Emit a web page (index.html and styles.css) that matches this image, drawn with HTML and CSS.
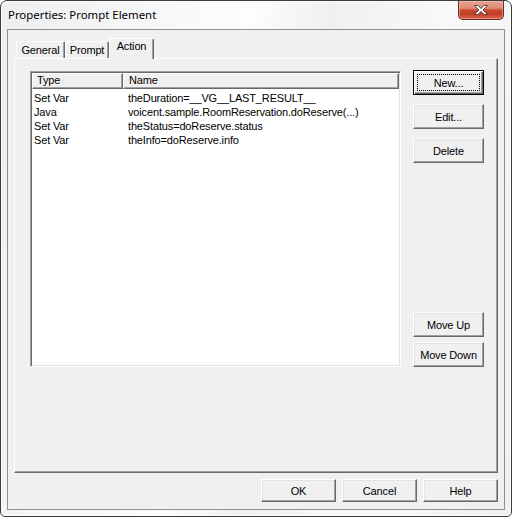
FILE: index.html
```html
<!DOCTYPE html>
<html>
<head>
<meta charset="utf-8">
<title>Properties: Prompt Element</title>
<link rel="stylesheet" href="styles.css">
</head>
<body>
<div class="window">
  <div class="titlebar">
    <span class="title">Properties: Prompt Element</span>
    <div class="close">
      <svg width="44" height="18" viewBox="0 0 44 18">
        <path d="M15.5 4.5 h3.4 l3.1 3 l3.1 -3 h3.4 l-4.5 4.5 l4.5 4.5 h-3.4 l-3.1 -3 l-3.1 3 h-3.4 l4.5 -4.5 z" fill="#ffffff" stroke="#4a3a3a" stroke-width="0.9" stroke-linejoin="round"/>
      </svg>
    </div>
  </div>
  <div class="client">
    <div class="tabs">
      <div class="tab tab-general">General</div>
      <div class="tab tab-prompt">Prompt</div>
      <div class="tab tab-action active">Action</div>
    </div>
    <div class="panel">
      <div class="list">
        <div class="list-head">
          <div class="hcell hcell-type">Type</div>
          <div class="hcell hcell-name">Name</div>
        </div>
        <div class="rows">
          <div class="row"><span class="c-type">Set Var</span><span class="c-name">theDuration=__VG__LAST_RESULT__</span></div>
          <div class="row"><span class="c-type">Java</span><span class="c-name">voicent.sample.RoomReservation.doReserve(...)</span></div>
          <div class="row"><span class="c-type">Set Var</span><span class="c-name">theStatus=doReserve.status</span></div>
          <div class="row"><span class="c-type">Set Var</span><span class="c-name">theInfo=doReserve.info</span></div>
        </div>
      </div>
      <div class="side">
        <div class="group group-top">
          <div class="btn btn-default"><span class="focus">New...</span></div>
          <div class="btn">Edit...</div>
          <div class="btn">Delete</div>
        </div>
        <div class="group group-bottom">
          <div class="btn">Move Up</div>
          <div class="btn">Move Down</div>
        </div>
      </div>
    </div>
    <div class="footer">
      <div class="btn btn-foot">OK</div>
      <div class="btn btn-foot">Cancel</div>
      <div class="btn btn-foot">Help</div>
    </div>
  </div>
</div>
</body>
</html>
```
FILE: styles.css
```css
* { box-sizing: border-box; }
html, body { margin: 0; padding: 0; }
body {
  width: 512px;
  height: 517px;
  background: #ffffff;
  font-family: "Liberation Sans", Arial, sans-serif;
  font-size: 11px;
  letter-spacing: -0.15px;
  color: #000;
  overflow: hidden;
}
.window {
  width: 512px;
  height: 517px;
  border: 1px solid #3c3c3c;
  border-radius: 7px 7px 5px 5px;
  background: linear-gradient(100deg, #eceef0 0%, #f6f7f8 25%, #fdfdfd 42%, #eef0f2 55%, #f9f9fa 75%, #eef0f2 100%);
  box-shadow: inset 1px 1px 0 #fbfbfb, inset -1px -1px 0 #fbfbfb;
  padding: 0 6px 6px 6px;
  display: flex;
  flex-direction: column;
}
.titlebar {
  height: 28px;
  display: flex;
  align-items: flex-start;
  padding-left: 1px;
}
.title {
  font-family: "Noto Sans", "Segoe UI", sans-serif;
  font-size: 11.4px;
  letter-spacing: 0;
  line-height: 16px;
  margin-top: 6px;
  color: #000;
}
.close {
  margin-left: auto;
  margin-right: 1px;
  width: 46px;
  height: 19px;
  border: 1px solid #6d2a20;
  border-top: none;
  border-radius: 0 0 5px 5px;
  background: linear-gradient(180deg, #e8a493 0%, #dd8a77 40%, #c94a33 50%, #c23c26 70%, #d6654a 100%);
  box-shadow: inset 0 0 0 1px rgba(255,200,190,0.45);
  display: flex;
  align-items: center;
  justify-content: center;
}
.close svg { display: block; }
.client {
  flex: 1;
  border: 1px solid #8d9094;
  background: #f0f0f0;
  display: flex;
  flex-direction: column;
  padding: 8px 6px 7px 6px;
}
.tabs {
  height: 20px;
  display: flex;
  align-items: flex-end;
  padding-left: 2px;
  position: relative;
  z-index: 2;
}
.tab {
  height: 17px;
  border-top: 1px solid #ffffff;
  border-left: 1px solid #ffffff;
  border-right: 1px solid #696969;
  box-shadow: inset -1px 0 0 #a0a0a0;
  border-radius: 2px 2px 0 0;
  background: #f0f0f0;
  text-align: center;
  line-height: 15px;
  padding-top: 1px;
}
.tab-general { width: 49px; }
.tab-prompt { width: 44px; }
.tab-action { width: 45px; }
.tab.active {
  height: 21px;
  margin-bottom: -1px;
  line-height: 15px;
  padding-top: 0;
}
.panel {
  height: 415px;
  border-top: 1px solid #ffffff;
  border-left: 1px solid #ffffff;
  border-right: 1px solid #696969;
  border-bottom: 1px solid #696969;
  box-shadow: inset -1px -1px 0 #a0a0a0;
  display: flex;
  padding: 12px 0 0 15px;
  gap: 12px;
}
.list {
  width: 371px;
  height: 296px;
  background: #ffffff;
  border-top: 1px solid #a0a0a0;
  border-left: 1px solid #a0a0a0;
  border-right: 1px solid #ffffff;
  border-bottom: 1px solid #ffffff;
  box-shadow: inset 1px 1px 0 #696969, inset -1px -1px 0 #e3e3e3;
  padding: 1px;
}
.list-head {
  display: flex;
  height: 16px;
}
.hcell {
  height: 16px;
  background: #f0f0f0;
  border-top: 1px solid #ffffff;
  border-left: 1px solid #ffffff;
  border-right: 1px solid #696969;
  border-bottom: 1px solid #696969;
  box-shadow: inset -1px -1px 0 #a0a0a0;
  line-height: 13px;
}
.hcell-type { width: 91px; padding-left: 4px; }
.hcell-name { flex: 1; padding-left: 5px; }
.rows { padding-top: 2px; }
.row {
  height: 14px;
  line-height: 14px;
  display: flex;
  white-space: nowrap;
}
.c-type { width: 96px; padding-left: 2px; }
.side {
  width: 71px;
  height: 297px;
  margin-top: -1px;
  display: flex;
  flex-direction: column;
  justify-content: space-between;
}
.group {
  display: flex;
  flex-direction: column;
}
.group-top { gap: 9px; }
.group-bottom { gap: 5px; }
.btn {
  height: 25px;
  background: #f0f0f0;
  border-top: 1px solid #ffffff;
  border-left: 1px solid #ffffff;
  border-right: 1px solid #696969;
  border-bottom: 1px solid #696969;
  box-shadow: inset -1px -1px 0 #a0a0a0, inset 1px 1px 0 #e3e3e3;
  display: flex;
  align-items: center;
  justify-content: center;
  white-space: nowrap;
}
.btn-default {
  border: 1px solid #000000;
  box-shadow: inset 1px 1px 0 #ffffff, inset -1px -1px 0 #696969, inset -2px -2px 0 #a0a0a0;
  padding: 3px;
}
.focus {
  flex: 1;
  align-self: stretch;
  border: 1px dotted #000;
  display: flex;
  align-items: center;
  justify-content: center;
}
.footer {
  margin-top: 6px;
  display: flex;
  justify-content: flex-end;
  gap: 6px;
}
.btn-foot {
  width: 75px;
  height: 23px;
}
```
